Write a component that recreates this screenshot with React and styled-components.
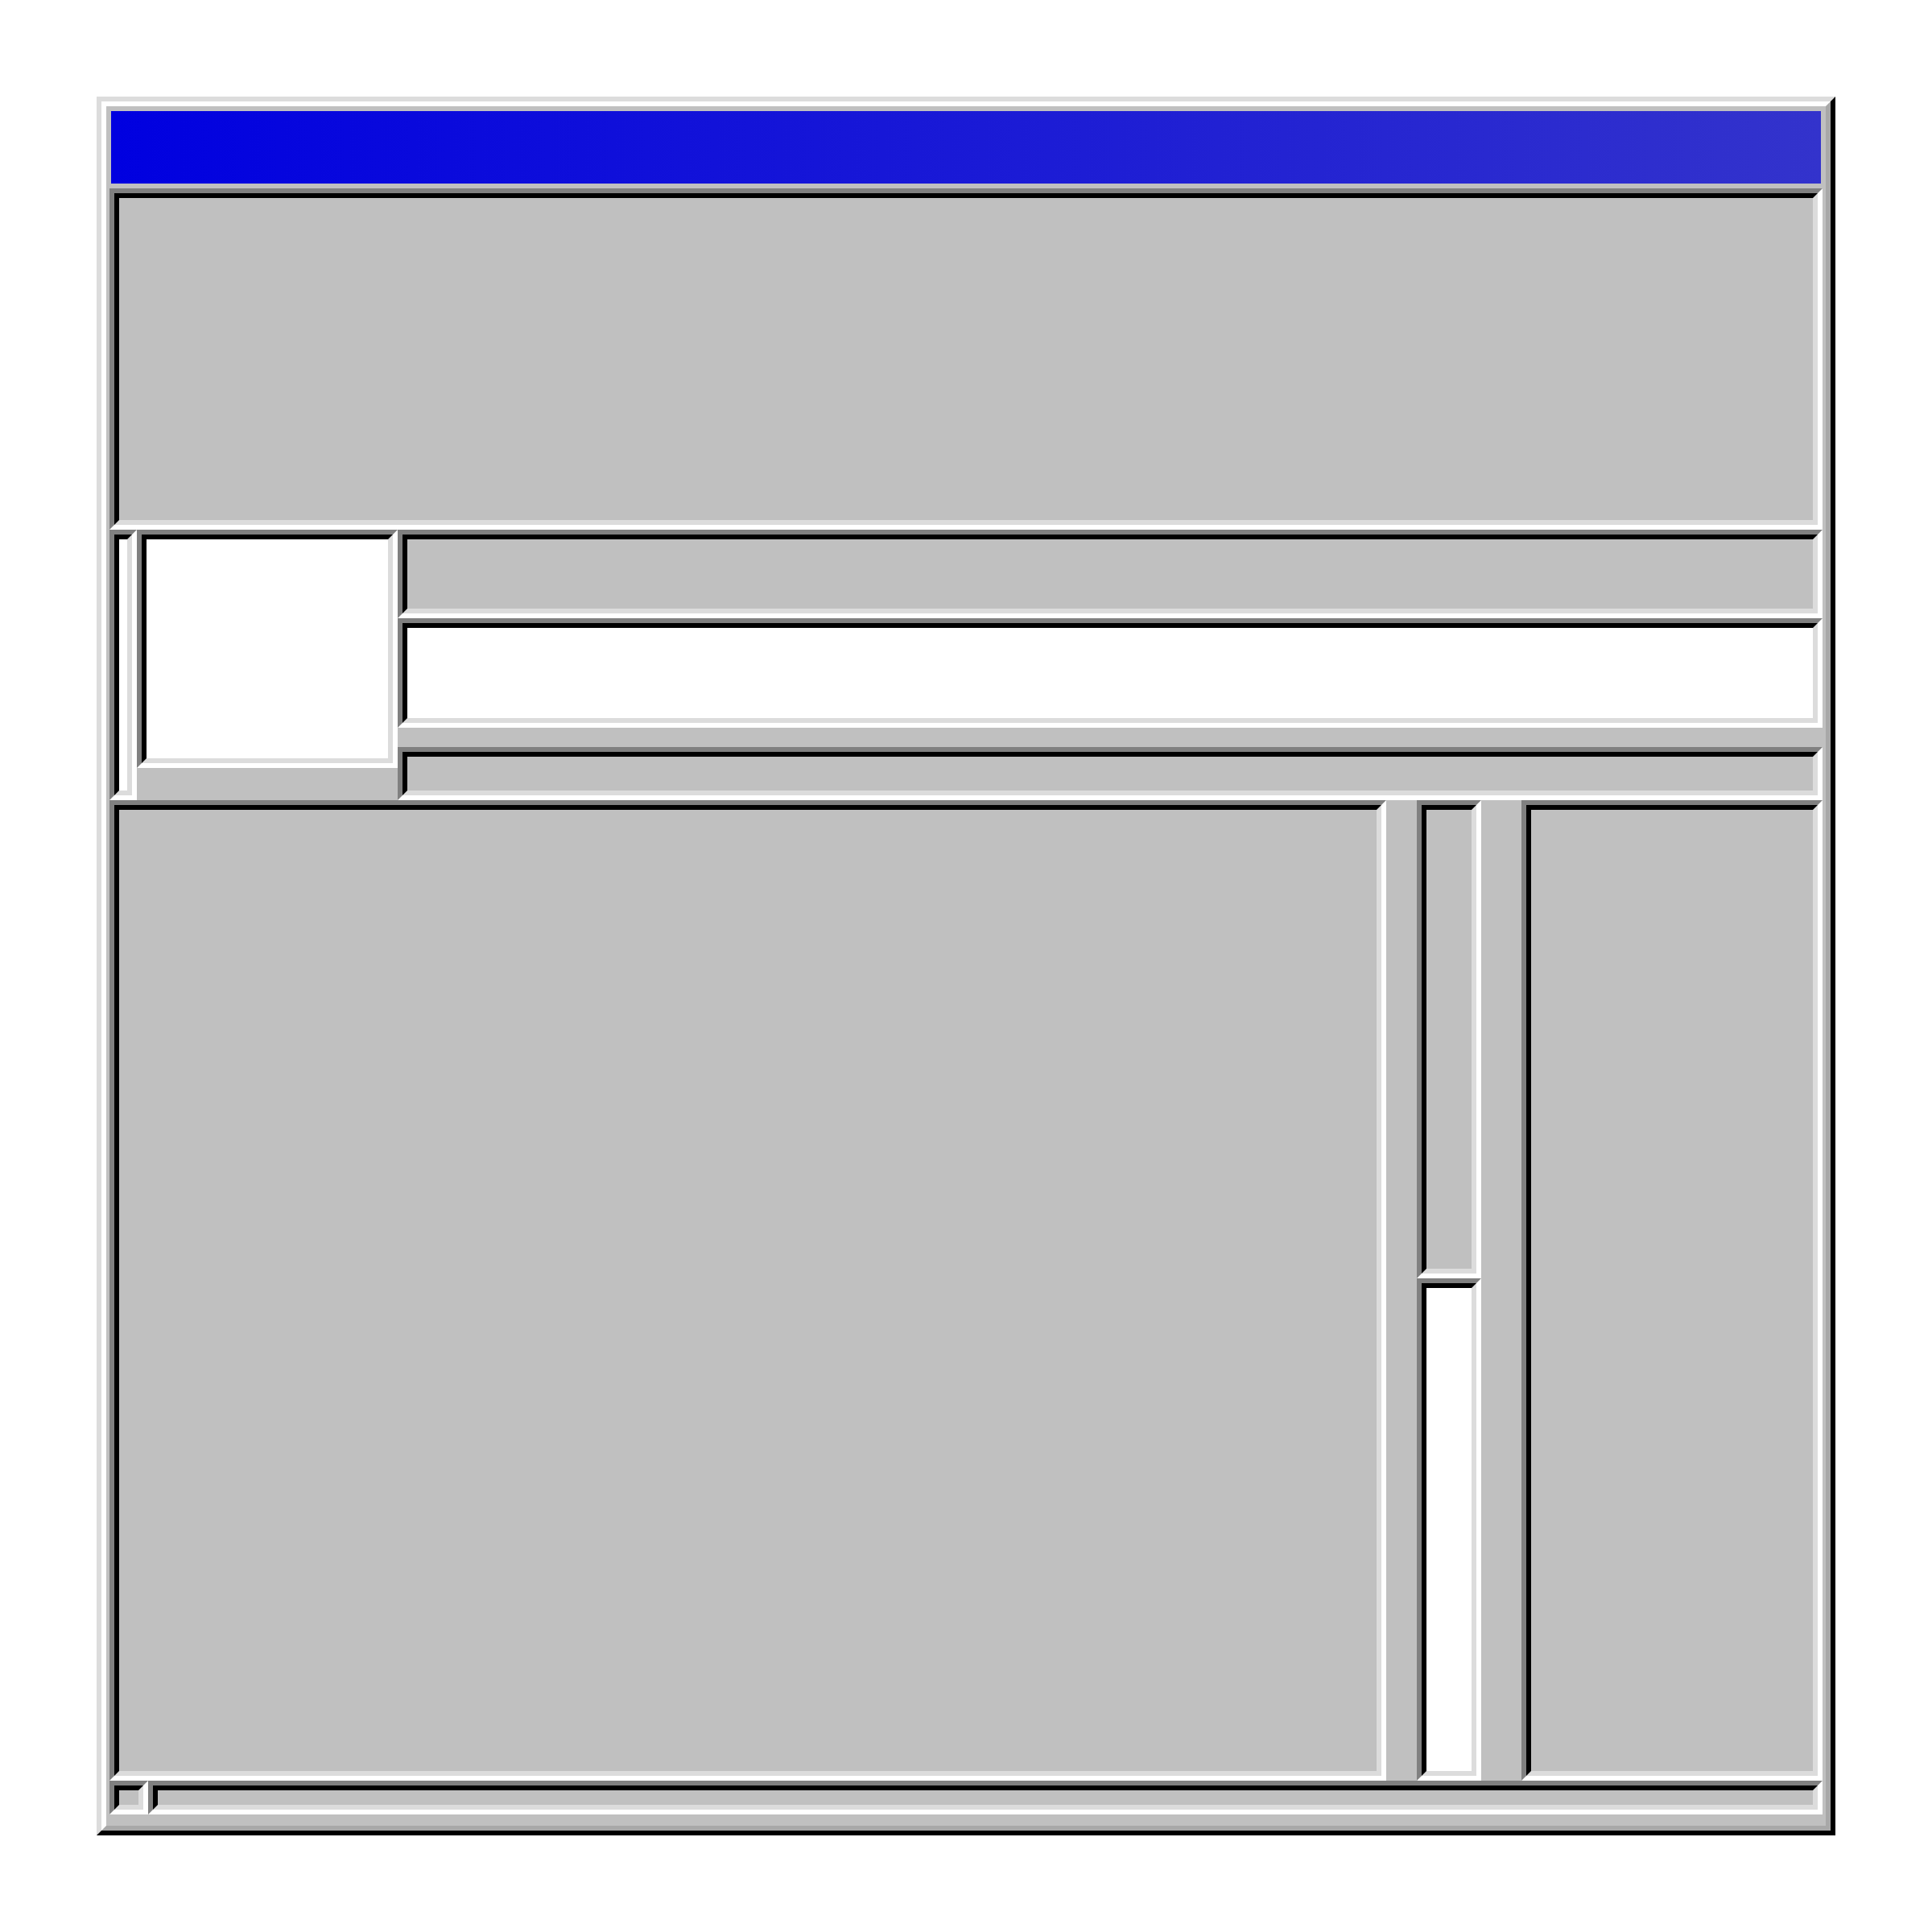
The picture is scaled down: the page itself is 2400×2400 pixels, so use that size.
import styled, { createGlobalStyle } from "styled-components";

const GlobalStyle = createGlobalStyle`
    * {
        box-sizing: border-box;
    }
    body {
        margin: 0;
        background: #ffffff;
        font-family: "Liberation Sans", Arial, sans-serif;
    }
`

const Page = styled.div`
    padding: 120px;
`

const WindowFrame = styled.div`
    width: 2160px;
    height: 2160px;
    display: flex;
    border: 6px solid;
    border-color: #dcdcdc #000000 #000000 #dcdcdc;
`

const WindowBody = styled.div`
    flex: 1;
    display: flex;
    flex-direction: column;
    border: 6px solid;
    border-color: #ffffff #a8a8a8 #a8a8a8 #ffffff;
    background: #c0c0c0;
    padding: 4px;
`

const TitleBar = styled.div`
    height: 90px;
    margin: 2px 2px 6px 2px;
    background: linear-gradient(to right, #0000e0, #3333cc);
`

// two-tone sunken bevel: outer grey/white, inner black/light grey
const Sunken = styled.div`
    display: flex;
    border: 6px solid;
    border-color: #808080 #ffffff #ffffff #808080;
    width: ${p => p.$w ? `${p.$w}px` : "auto"};
    height: ${p => p.$h ? `${p.$h}px` : "auto"};
    flex: ${p => p.$grow ? 1 : "none"};
`

const SunkenFace = styled.div`
    flex: 1;
    border: 6px solid;
    border-color: #000000 #dcdcdc #dcdcdc #000000;
    background: ${p => p.$white ? "#ffffff" : "#c0c0c0"};
`

const Row = styled.div`
    display: flex;
    height: ${p => p.$h}px;
`

const Column = styled.div`
    display: flex;
    flex-direction: column;
    width: ${p => p.$w ? `${p.$w}px` : "auto"};
    flex: ${p => p.$grow ? 1 : "none"};
    margin-left: ${p => p.$gap || 0}px;
`

const Spacer = styled.div`
    height: ${p => p.$h}px;
`

const Panel = ({ w, h, grow, white }) => (
    <Sunken $w={w} $h={h} $grow={grow}>
        <SunkenFace $white={white} />
    </Sunken>
)

const App = () => {
    return (
        <>
            <GlobalStyle />
            <Page>
                <WindowFrame>
                    <WindowBody>
                        <TitleBar />
                        <Panel h={424} />
                        <Row $h={336}>
                            <Panel w={34} white />
                            <Column $w={324}>
                                <Panel h={296} white />
                            </Column>
                            <Column $grow>
                                <Panel h={110} />
                                <Panel h={136} white />
                                <Spacer $h={24} />
                                <Panel h={66} />
                            </Column>
                        </Row>
                        <Row $h={1218}>
                            <Panel w={1586} />
                            <Column $w={80} $gap={38}>
                                <Panel h={594} />
                                <Panel h={624} white />
                            </Column>
                            <Column $grow $gap={50}>
                                <Panel grow />
                            </Column>
                        </Row>
                        <Row $h={42}>
                            <Panel w={48} />
                            <Panel grow />
                        </Row>
                    </WindowBody>
                </WindowFrame>
            </Page>
        </>
    )
}

export default App;
